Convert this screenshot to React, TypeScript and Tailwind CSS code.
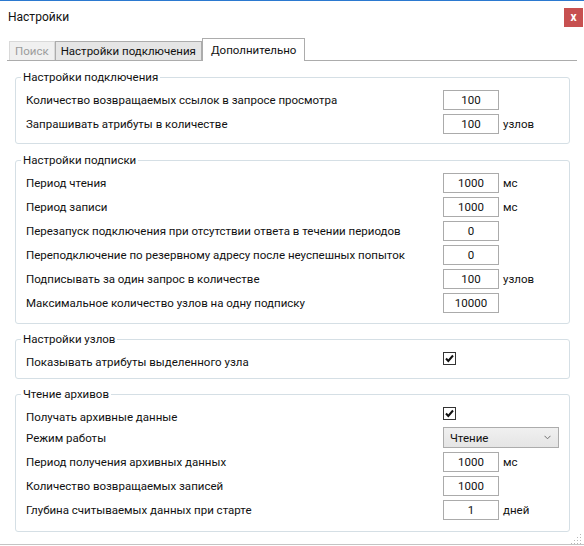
import React from "react";

type Row = { label: string; value: string; unit?: string };

const connectionRows: Row[] = [
  { label: "Количество возвращаемых ссылок в запросе просмотра", value: "100" },
  { label: "Запрашивать атрибуты в количестве", value: "100", unit: "узлов" },
];

const subscriptionRows: Row[] = [
  { label: "Период чтения", value: "1000", unit: "мс" },
  { label: "Период записи", value: "1000", unit: "мс" },
  { label: "Перезапуск подключения при отсутствии ответа в течении периодов", value: "0" },
  { label: "Переподключение по резервному адресу после неуспешных попыток", value: "0" },
  { label: "Подписывать за один запрос в количестве", value: "100", unit: "узлов" },
  { label: "Максимальное количество узлов на одну подписку", value: "10000" },
];

const archiveRows: Row[] = [
  { label: "Период получения архивных данных", value: "1000", unit: "мс" },
  { label: "Количество возвращаемых записей", value: "1000" },
  { label: "Глубина считываемых данных при старте", value: "1", unit: "дней" },
];

function NumberBox({ value }: { value: string }) {
  return (
    <input
      readOnly
      value={value}
      className="w-[56px] h-[20px] border border-[#ababab] bg-white text-center text-[11.5px] leading-[18px] outline-none"
    />
  );
}

function FieldRow({ row }: { row: Row }) {
  return (
    <div className="flex items-center h-[24px]">
      <span className="flex-1 truncate">{row.label}</span>
      <NumberBox value={row.value} />
      <span className="ml-[4px] w-[66px]">{row.unit}</span>
    </div>
  );
}

function CheckBox() {
  return (
    <div className="w-[13px] h-[13px] border border-[#333333] bg-white flex items-center justify-center">
      <svg width="11" height="11" viewBox="0 0 11 11">
        <path d="M2 5.5 L4.3 8 L9 2.5" fill="none" stroke="#111" strokeWidth="2" />
      </svg>
    </div>
  );
}

function Group({
  title,
  className,
  children,
}: {
  title: string;
  className?: string;
  children: React.ReactNode;
}) {
  return (
    <fieldset className={`border border-[#d5dfe5] rounded-[3px] ${className ?? ""}`}>
      <legend className="ml-[5px] px-[2px] leading-[16px]">{title}</legend>
      {children}
    </fieldset>
  );
}

export default function App() {
  return (
    <div className="relative w-[584px] h-[546px] bg-white border-t border-[#2b79d0] flex flex-col font-['Roboto',sans-serif] text-[11.5px] leading-[16px] text-[#111]">
      {/* Title bar */}
      <div className="h-[37px] flex items-start justify-between pl-[8px] pr-[1px]">
        <span className="mt-[8px] text-[12px]">Настройки</span>
        <button className="mt-[7px] w-[19px] h-[19px] bg-[#c75050] text-white font-bold text-[12px] leading-[17px] flex items-center justify-center">
          x
        </button>
      </div>

      {/* Tabs */}
      <div className="mx-[7px] h-[23px] flex items-end border-b border-[#acacac] pl-[2px]">
        <div className="h-[19px] px-[5px] bg-[#f0f0f0] border border-b-0 border-[#d9d9d9] text-[#9c9c9c] leading-[18px]">
          Поиск
        </div>
        <div className="h-[19px] px-[5px] bg-[#e5e5e5] border border-b-0 border-[#acacac] leading-[18px]">
          Настройки подключения
        </div>
        <div className="h-[23px] -mb-px px-[8px] bg-white border border-b-0 border-[#acacac] leading-[22px]">
          Дополнительно
        </div>
      </div>

      {/* Content */}
      <div className="pl-[15px] pr-[14px] pt-[8px] flex flex-col">
        <Group title="Настройки подключения">
          <div className="pl-[10px] pt-[3px] pb-[7px]">
            {connectionRows.map((r) => (
              <FieldRow key={r.label} row={r} />
            ))}
          </div>
        </Group>

        <Group title="Настройки подписки" className="mt-[8px]">
          <div className="pl-[10px] pt-[3px] pb-[8px]">
            {subscriptionRows.map((r) => (
              <FieldRow key={r.label} row={r} />
            ))}
          </div>
        </Group>

        <Group title="Настройки узлов" className="mt-[7px]">
          <div className="pl-[10px] pt-[3px] pb-[4px]">
            <div className="flex items-center h-[24px]">
              <span className="flex-1">Показывать атрибуты выделенного узла</span>
              <div className="w-[126px] self-start mt-[2px]">
                <CheckBox />
              </div>
            </div>
          </div>
        </Group>

        <Group title="Чтение архивов" className="mt-[7px]">
          <div className="pl-[10px] pt-[4px] pb-[9px]">
            <div className="flex items-center h-[21px]">
              <span className="flex-1">Получать архивные данные</span>
              <div className="w-[126px] self-start mt-[1px]">
                <CheckBox />
              </div>
            </div>
            <div className="flex items-center h-[21px]">
              <span className="flex-1">Режим работы</span>
              <div className="w-[126px]">
                <div className="w-[116px] h-[21px] border border-[#acacac] bg-gradient-to-b from-[#f0f0f0] to-[#e5e5e5] flex items-center justify-between pl-[6px] pr-[7px]">
                  <span>Чтение</span>
                  <svg width="7" height="5" viewBox="0 0 7 5">
                    <path d="M0.5 0.8 L3.5 3.8 L6.5 0.8" fill="none" stroke="#707070" strokeWidth="1" />
                  </svg>
                </div>
              </div>
            </div>
            <div className="mt-[2px]">
              {archiveRows.map((r) => (
                <FieldRow key={r.label} row={r} />
              ))}
            </div>
          </div>
        </Group>
      </div>

      {/* Bottom edge */}
      <div className="mt-auto mb-[1px] border-t border-[#c4c4c4]" />
      <svg className="absolute right-[1px] bottom-[1px]" width="12" height="12" viewBox="0 0 12 12">
        {[
          [10, 2],
          [10, 5],
          [7, 5],
          [10, 8],
          [7, 8],
          [4, 8],
          [10, 11],
          [7, 11],
          [4, 11],
          [1, 11],
        ].map(([x, y]) => (
          <rect key={`${x}-${y}`} x={x - 1} y={y - 1} width="1" height="1" fill="#b8b8b8" />
        ))}
      </svg>
    </div>
  );
}
